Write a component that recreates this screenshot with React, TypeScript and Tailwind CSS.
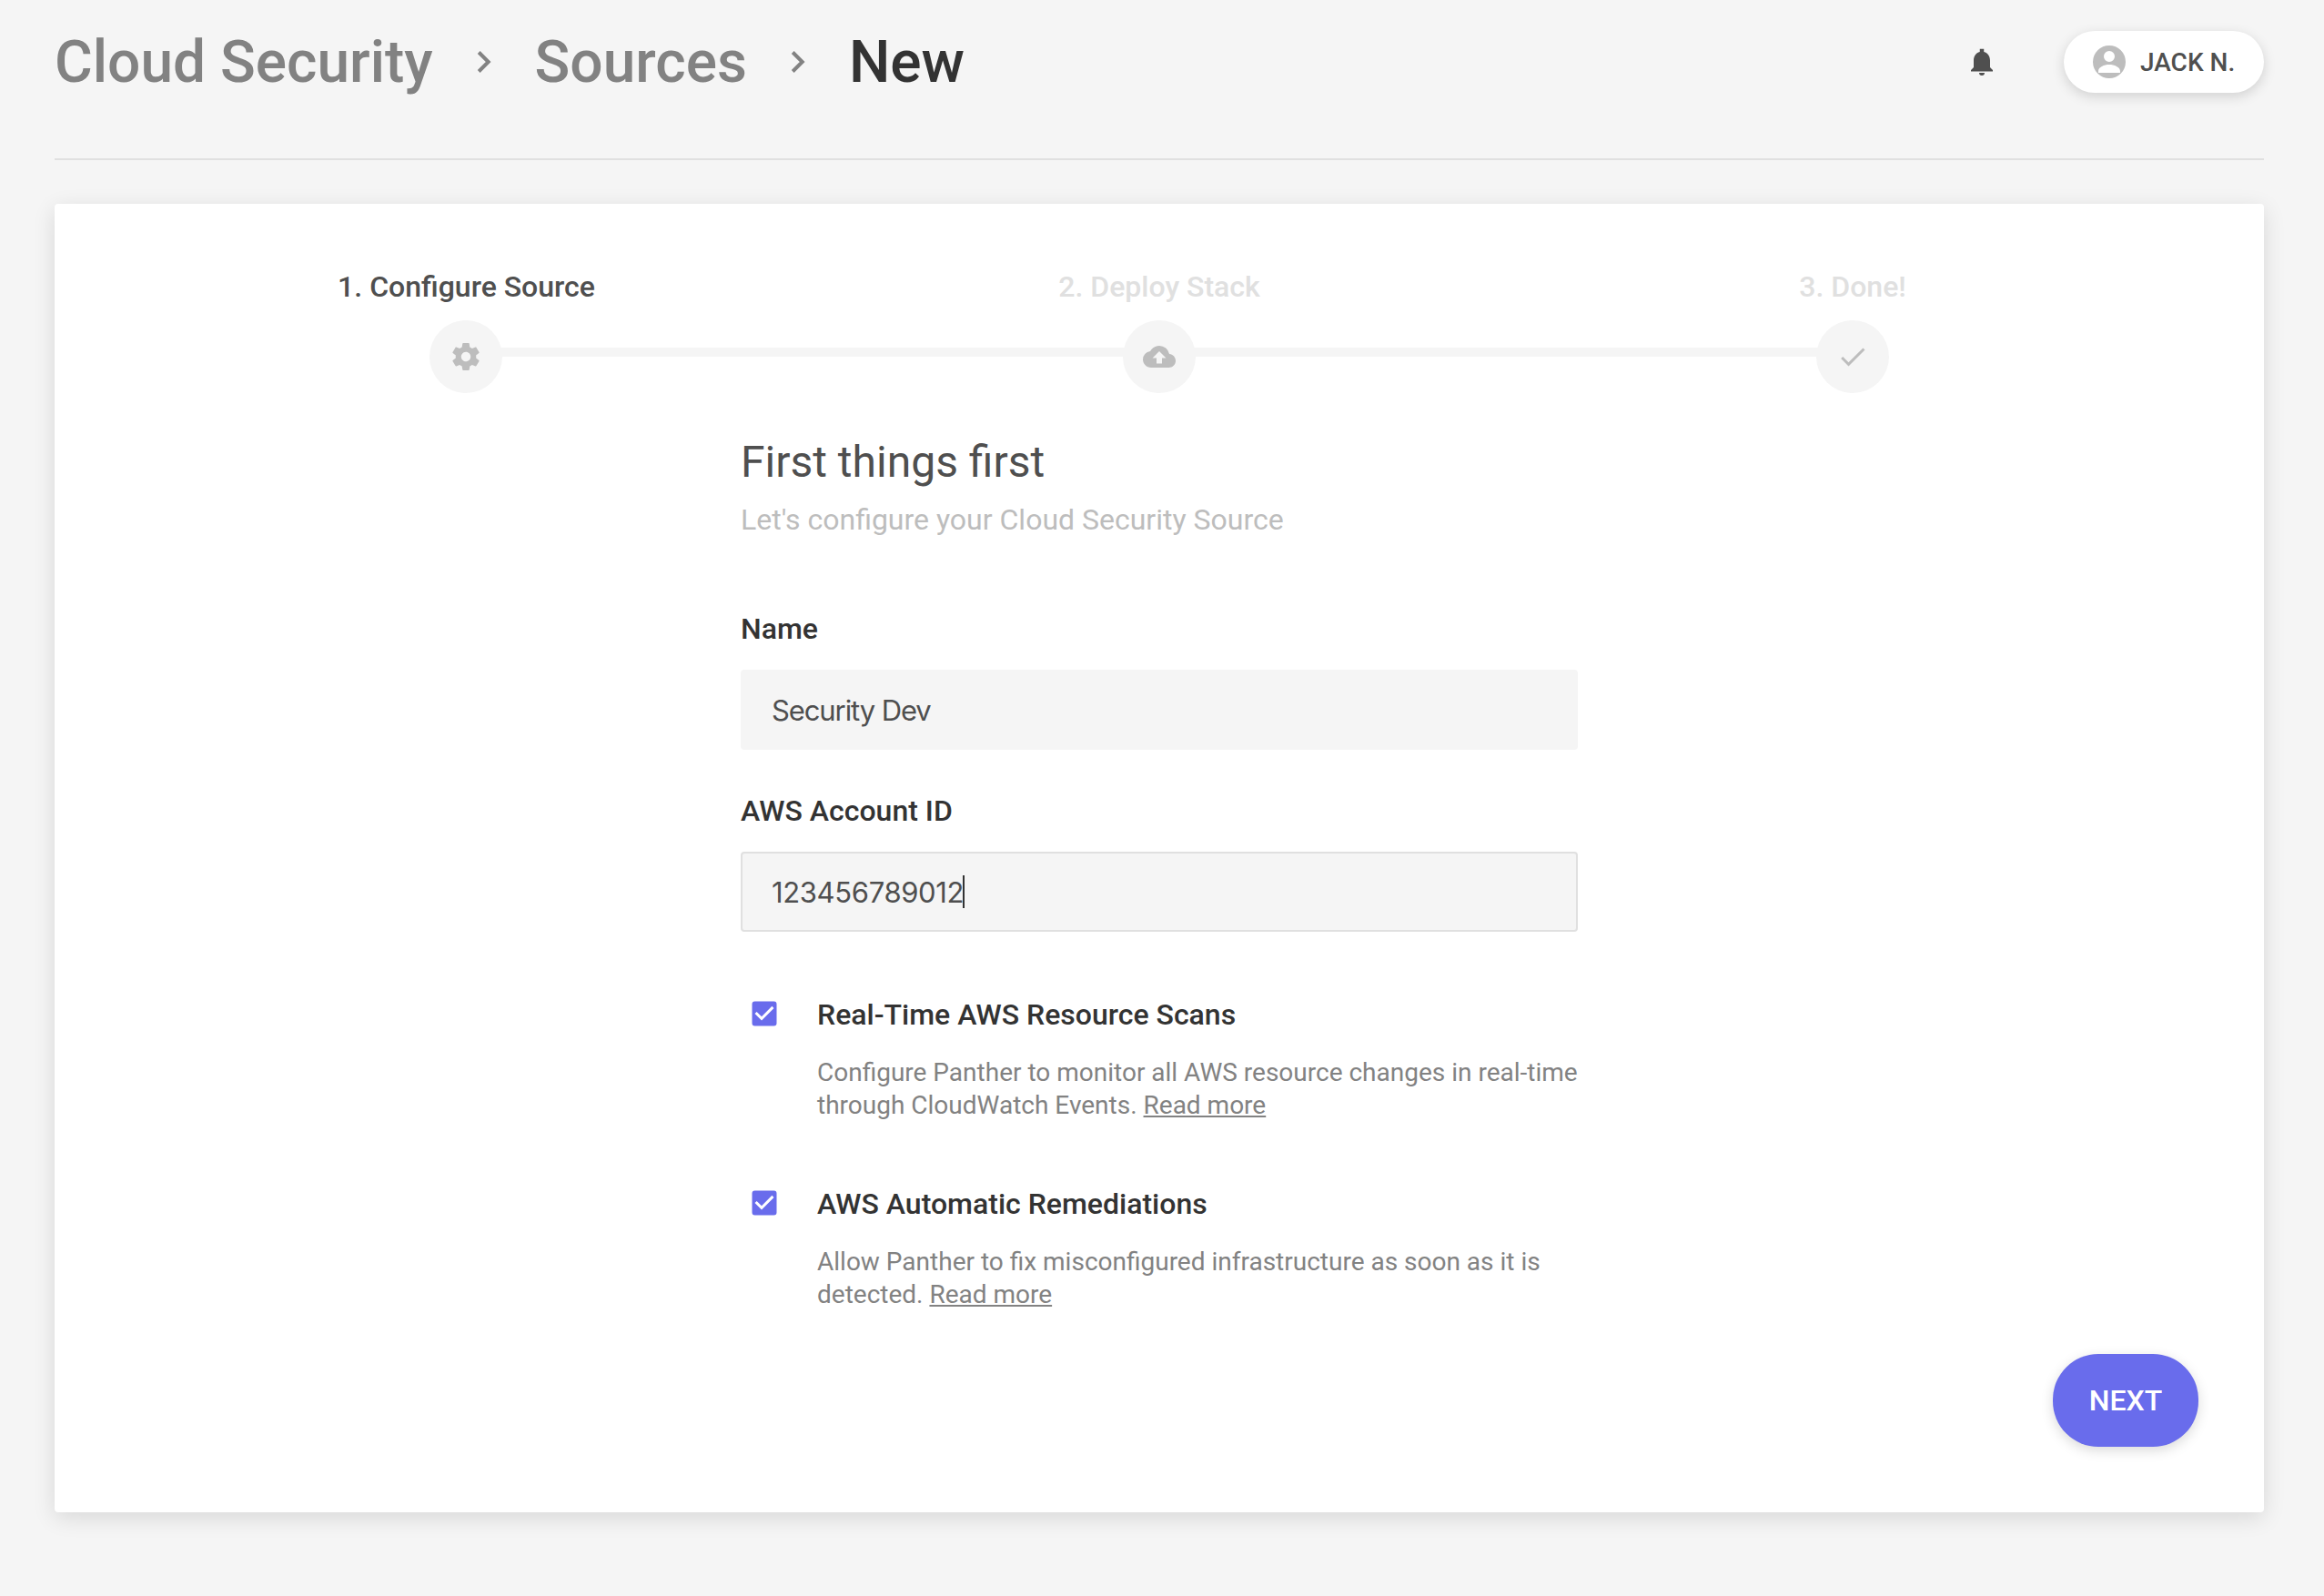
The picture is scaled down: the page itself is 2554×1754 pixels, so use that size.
import { MdBackup, MdCheck, MdCheckBox } from "react-icons/md";
import type { ReactNode } from "react";

function Chevron() {
  return (
    <svg className="h-6 w-4 shrink-0" viewBox="0 0 16 24" fill="none" stroke="#828282" strokeWidth="4">
      <path d="M2.2 1.5 12.7 12 2.2 22.5" />
    </svg>
  );
}

function Bell() {
  return (
    <svg className="size-9" viewBox="0 0 24 24" fill="#4f4f4f">
      <path d="M12 22a2 2 0 0 0 2-2h-4a2 2 0 0 0 2 2zm6-6v-5c0-3.07-1.64-5.64-4.5-6.32V2.5h-3v2.18C7.63 5.36 6 7.92 6 11v5l-2 2v1h16v-1l-2-2z" />
    </svg>
  );
}

function Gear() {
  return (
    <svg className="size-9" viewBox="0 0 24 24" fill="currentColor">
      <path d="M19.43 12.98c.04-.32.07-.64.07-.98s-.03-.66-.07-.98l2.11-1.65c.19-.15.24-.42.12-.64l-2-3.46c-.12-.22-.39-.3-.61-.22l-2.49 1c-.52-.4-1.08-.73-1.69-.98l-.38-2.65C14.46 2.18 14.25 2 14 2h-4c-.25 0-.46.18-.49.42l-.38 2.65c-.61.25-1.17.59-1.69.98l-2.49-1c-.23-.09-.49 0-.61.22l-2 3.46c-.13.22-.07.49.12.64l2.11 1.65c-.04.32-.07.65-.07.98s.03.66.07.98l-2.11 1.65c-.19.15-.24.42-.12.64l2 3.46c.12.22.39.3.61.22l2.49-1c.52.4 1.08.73 1.69.98l.38 2.65c.03.24.24.42.49.42h4c.25 0 .46-.18.49-.42l.38-2.65c.61-.25 1.17-.59 1.69-.98l2.49 1c.23.09.49 0 .61-.22l2-3.46c.12-.22.07-.49-.12-.64l-2.11-1.65zM12 15.5c-1.93 0-3.5-1.57-3.5-3.5s1.57-3.5 3.5-3.5 3.5 1.57 3.5 3.5-1.57 3.5-3.5 3.5z" />
    </svg>
  );
}

function Avatar() {
  return (
    <svg className="size-9 shrink-0" viewBox="2 2 20 20" fill="#bdbdbd">
      <path d="M12 2a10 10 0 1 0 0 20 10 10 0 0 0 0-20zm0 3.3a3.35 3.35 0 1 1 0 6.7 3.35 3.35 0 0 1 0-6.7zM5.35 18.7v-1.2c0-2.4 3.6-3.9 6.65-3.9s6.65 1.5 6.65 3.9v1.2z" />
    </svg>
  );
}

function Step({ label, active, children }: { label: string; active?: boolean; children: ReactNode }) {
  return (
    <div className="flex w-20 flex-col items-center">
      <div className={`h-10 text-[32px] leading-10 font-medium whitespace-nowrap ${active ? "pl-px text-[#4f4f4f]" : "text-[#e0e0e0]"}`}>
        {label}
      </div>
      <div className="mt-[17px] flex size-20 items-center justify-center rounded-full bg-[#f5f5f5] text-[#bdbdbd]">
        {children}
      </div>
    </div>
  );
}

function StepLine() {
  return <div className="-mx-1 mt-[87px] h-2.5 flex-1 bg-[#f5f5f5]" />;
}

function Option({ title, children }: { title: string; children: ReactNode }) {
  return (
    <div className="flex">
      <MdCheckBox className="mt-px ml-2 size-9 shrink-0 text-[#696cec]" />
      <div className="ml-10">
        <div className="text-[32px] leading-10 font-medium text-[#333333]">{title}</div>
        <p className="mt-[26px] text-[28px] leading-9 whitespace-nowrap text-[#828282]">{children}</p>
      </div>
    </div>
  );
}

function ReadMore() {
  return <a className="underline decoration-2 underline-offset-2">Read more</a>;
}

export default function App() {
  return (
    <div className="h-[1754px] w-[2554px] overflow-hidden bg-[#f5f5f5] pr-[66px] pl-[60px] font-['Roboto',sans-serif]">
      <header className="flex h-44 items-start justify-between border-b-2 border-[#e0e0e0] pt-[34px]">
        <nav className="flex h-[68px] items-center text-[64px] leading-[68px] font-medium text-[#828282]">
          <span className="pt-0.5">Cloud Security</span>
          <span className="mx-12"><Chevron /></span>
          <span className="pt-0.5">Sources</span>
          <span className="mx-12"><Chevron /></span>
          <span className="pt-0.5 text-[#333333]">New</span>
        </nav>
        <div className="flex h-[68px] items-center gap-[72px]">
          <Bell />
          <button className="flex h-[68px] w-[220px] items-center gap-4 rounded-full bg-white pl-8 text-[28px] font-medium whitespace-nowrap text-[#4f4f4f] shadow-[0_4px_14px_rgba(0,0,0,0.15)]">
            <Avatar />
            <span className="pt-0.5">JACK N.</span>
          </button>
        </div>
      </header>

      <main className="mt-12 flex h-[1438px] flex-col rounded-[4px] bg-white px-[72px] pt-[71px] shadow-[0_6px_24px_rgba(0,0,0,0.12)]">
        <div className="mx-auto flex w-[1604px]">
          <Step label="1. Configure Source" active><Gear /></Step>
          <StepLine />
          <Step label="2. Deploy Stack"><MdBackup className="size-9" /></Step>
          <StepLine />
          <Step label="3. Done!"><MdCheck className="size-9" /></Step>
        </div>

        <section className="mx-auto mt-12 w-[920px]">
          <h1 className="text-[48px] leading-14 text-[#4f4f4f]">First things first</h1>
          <p className="mt-[15px] text-[32px] leading-10 text-[#bdbdbd]">Let's configure your Cloud Security Source</p>

          <div className="mt-20 text-[32px] leading-10 font-medium text-[#333333]">Name</div>
          <div className="mt-[25px] flex h-[88px] items-center rounded-[4px] bg-[#f5f5f5] px-[34px] font-['Inter',sans-serif] text-[31px] text-[#4f4f4f]">
            <span className="pt-0.5 tracking-[-1.1px]">Security Dev</span>
          </div>

          <div className="mt-[47px] text-[32px] leading-10 font-medium text-[#333333]">AWS Account ID</div>
          <div className="mt-[25px] flex h-[88px] items-center rounded-[4px] border-2 border-[#e0e0e0] bg-[#f5f5f5] px-8 font-['Inter',sans-serif] text-[31px] text-[#4f4f4f]">
            <span className="w-[210px] pt-0.5 tracking-[-0.35px]">123456789012</span>
            <span className="h-9 w-0.5 bg-[#333333]" />
          </div>

          <div className="mt-[71px] flex flex-col gap-[70px]">
            <Option title="Real-Time AWS Resource Scans">
              Configure Panther to monitor all AWS resource changes in real-time
              <br />
              through CloudWatch Events. <ReadMore />
            </Option>
            <Option title="AWS Automatic Remediations">
              Allow Panther to fix misconfigured infrastructure as soon as it is
              <br />
              detected. <ReadMore />
            </Option>
          </div>
        </section>

        <button className="mt-[47px] h-[102px] w-40 self-end rounded-[50px] bg-[#696cec] text-[32px] font-medium text-white shadow-[0_4px_14px_rgba(0,0,0,0.15)]">
          NEXT
        </button>
      </main>
    </div>
  );
}
